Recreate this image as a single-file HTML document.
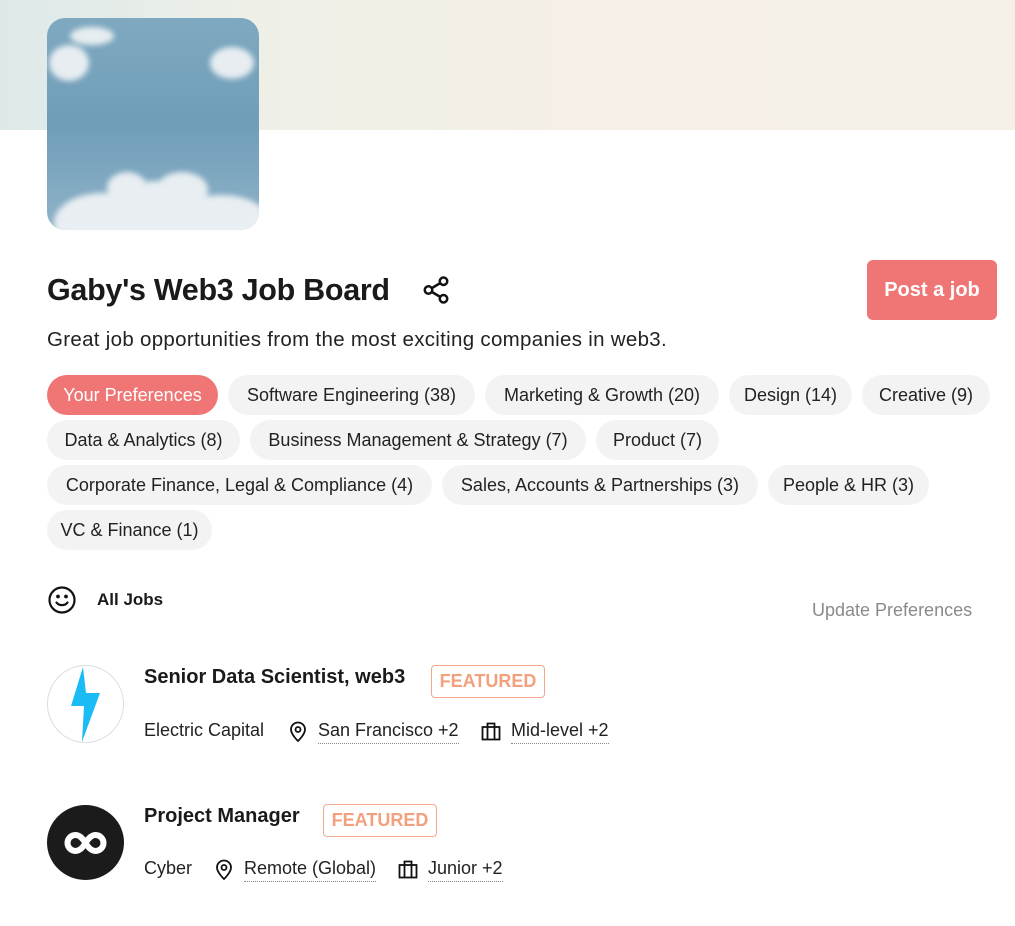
<!DOCTYPE html>
<html><head><meta charset="utf-8"><style>
*{margin:0;padding:0;box-sizing:border-box}
body{width:1015px;height:926px;overflow:hidden;background:#fff;font-family:"Liberation Sans",sans-serif;color:#1a1a1a;position:relative}
.banner{position:absolute;left:0;top:0;width:1015px;height:130px;background:linear-gradient(90deg,#dde9e9 0%,#eef0e8 25%,#f6efe5 60%,#f4f0e6 100%)}
.logo{position:absolute;left:47px;top:18px;width:212px;height:212px;border-radius:18px;overflow:hidden;background:linear-gradient(180deg,#7fa9c0 0%,#6f9db8 50%,#8fb3c8 100%)}
.abs{position:absolute}
.title{left:47px;top:273px;font-size:30.5px;font-weight:bold;letter-spacing:-0.3px}
.desc{left:47px;top:328px;font-size:20.5px;color:#222;letter-spacing:0.3px}
.btn{left:867px;top:260px;width:130px;height:60px;background:#ef7674;border-radius:6px;color:#fff;font-size:20px;font-weight:bold;display:flex;align-items:center;justify-content:center}
.chip{position:absolute;height:40px;border-radius:20px;background:#f3f3f3;font-size:18px;line-height:40px;color:#222;text-align:center;white-space:nowrap}
.chip.on{background:#ef7674;color:#fff}
.jt{font-size:20px;font-weight:bold}
.feat{position:absolute;height:33px;border:1.5px solid #f2a88c;border-radius:4px;color:#f2a07e;font-size:18px;font-weight:bold;line-height:30px;text-align:center}
.meta{font-size:18px;color:#222;white-space:nowrap}
.u{border-bottom:1.5px dotted #888;padding-bottom:2px}
</style></head><body>
<div class="banner"></div>
<div class="logo">
<svg width="212" height="212" viewBox="0 0 212 212">
<defs><filter id="b"><feGaussianBlur stdDeviation="3"/></filter></defs>
<g fill="#f3f5f7" opacity="0.9" filter="url(#b)">
<ellipse cx="22" cy="45" rx="20" ry="18"/><ellipse cx="45" cy="18" rx="22" ry="9"/><ellipse cx="185" cy="45" rx="22" ry="16"/>
<ellipse cx="55" cy="205" rx="48" ry="30"/><ellipse cx="110" cy="195" rx="48" ry="32"/><ellipse cx="175" cy="205" rx="48" ry="28"/>
<ellipse cx="80" cy="170" rx="20" ry="16"/><ellipse cx="135" cy="172" rx="26" ry="18"/>
</g></svg></div>
<div class="abs title">Gaby's Web3 Job Board</div>
<svg class="abs" style="left:421px;top:275px" width="30" height="30" viewBox="0 0 24 24" fill="none" stroke="#111" stroke-width="2"><circle cx="18" cy="5" r="3"/><circle cx="6" cy="12" r="3"/><circle cx="18" cy="19" r="3"/><path d="M8.6 13.5l6.8 4M15.4 6.5l-6.8 4"/></svg>
<div class="abs btn">Post a job</div>
<div class="abs desc">Great job opportunities from the most exciting companies in web3.</div>

<div class="chip on" style="left:47px;top:375px;width:171px">Your Preferences</div>
<div class="chip" style="left:228px;top:375px;width:247px">Software Engineering (38)</div>
<div class="chip" style="left:485px;top:375px;width:234px">Marketing &amp; Growth (20)</div>
<div class="chip" style="left:729px;top:375px;width:123px">Design (14)</div>
<div class="chip" style="left:862px;top:375px;width:128px">Creative (9)</div>
<div class="chip" style="left:47px;top:420px;width:193px">Data &amp; Analytics (8)</div>
<div class="chip" style="left:250px;top:420px;width:336px">Business Management &amp; Strategy (7)</div>
<div class="chip" style="left:596px;top:420px;width:123px">Product (7)</div>
<div class="chip" style="left:47px;top:465px;width:385px">Corporate Finance, Legal &amp; Compliance (4)</div>
<div class="chip" style="left:442px;top:465px;width:316px">Sales, Accounts &amp; Partnerships (3)</div>
<div class="chip" style="left:768px;top:465px;width:161px">People &amp; HR (3)</div>
<div class="chip" style="left:47px;top:510px;width:165px">VC &amp; Finance (1)</div>

<svg class="abs" style="left:47px;top:585px" width="30" height="30" viewBox="0 0 30 30" fill="none" stroke="#111" stroke-width="2.2"><circle cx="15" cy="15" r="12.5"/><path d="M9.5 17.5c2.5 3.5 8.5 3.5 11 0" stroke-linecap="round"/><circle cx="11" cy="11.5" r="0.8" fill="#111"/><circle cx="19" cy="11.5" r="0.8" fill="#111"/></svg>
<div class="abs" style="left:97px;top:590px;font-size:17px;font-weight:bold">All Jobs</div>
<div class="abs" style="left:812px;top:600px;font-size:18px;color:#8a8a8a">Update Preferences</div>

<div class="abs" style="left:47px;top:665px;width:77px;height:78px;border-radius:50%;border:1px solid #ddd;background:#fff"></div>
<svg class="abs" style="left:66px;top:667px" width="40" height="75" viewBox="0 0 40 75"><path d="M17 0L5 39h13l-2 36 18-49H20z" fill="#1bbcf5"/></svg>
<div class="abs jt" style="left:144px;top:666px">Senior Data Scientist, web3</div>
<div class="feat" style="left:431px;top:665px;width:114px">FEATURED</div>
<div class="abs meta" style="left:144px;top:720px">Electric Capital</div>
<svg class="abs" style="left:288px;top:721px" width="20" height="22" viewBox="0 0 20 22" fill="none" stroke="#111" stroke-width="1.8"><path d="M10 20s-7-6.5-7-11.5a7 7 0 0114 0C17 13.5 10 20 10 20z"/><circle cx="10" cy="8.5" r="2.5"/></svg>
<div class="abs meta u" style="left:318px;top:720px">San Francisco +2</div>
<svg class="abs" style="left:481px;top:722px" width="20" height="19" viewBox="0 0 20 19" fill="none" stroke="#111" stroke-width="1.8"><rect x="1.5" y="5" width="17" height="12.5"/><path d="M6.5 5V1.5h7V5M6.5 5v12.5M13.5 5v12.5"/></svg>
<div class="abs meta u" style="left:511px;top:720px">Mid-level +2</div>

<div class="abs" style="left:47px;top:805px;width:77px;height:75px;border-radius:50%;background:#1b1b1b"></div>
<svg class="abs" style="left:63px;top:830px" width="45" height="26" viewBox="0 0 45 26" fill="none" stroke="#fff" stroke-width="6"><path d="M22.5 13c-3-5-6-8-10-8a8 8 0 000 16c4 0 7-3 10-8s6-8 10-8a8 8 0 010 16c-4 0-7-3-10-8z"/></svg>
<div class="abs jt" style="left:144px;top:805px">Project Manager</div>
<div class="feat" style="left:323px;top:804px;width:114px">FEATURED</div>
<div class="abs meta" style="left:144px;top:858px">Cyber</div>
<svg class="abs" style="left:214px;top:859px" width="20" height="22" viewBox="0 0 20 22" fill="none" stroke="#111" stroke-width="1.8"><path d="M10 20s-7-6.5-7-11.5a7 7 0 0114 0C17 13.5 10 20 10 20z"/><circle cx="10" cy="8.5" r="2.5"/></svg>
<div class="abs meta u" style="left:244px;top:858px">Remote (Global)</div>
<svg class="abs" style="left:398px;top:860px" width="20" height="19" viewBox="0 0 20 19" fill="none" stroke="#111" stroke-width="1.8"><rect x="1.5" y="5" width="17" height="12.5"/><path d="M6.5 5V1.5h7V5M6.5 5v12.5M13.5 5v12.5"/></svg>
<div class="abs meta u" style="left:428px;top:858px">Junior +2</div>
</body></html>
